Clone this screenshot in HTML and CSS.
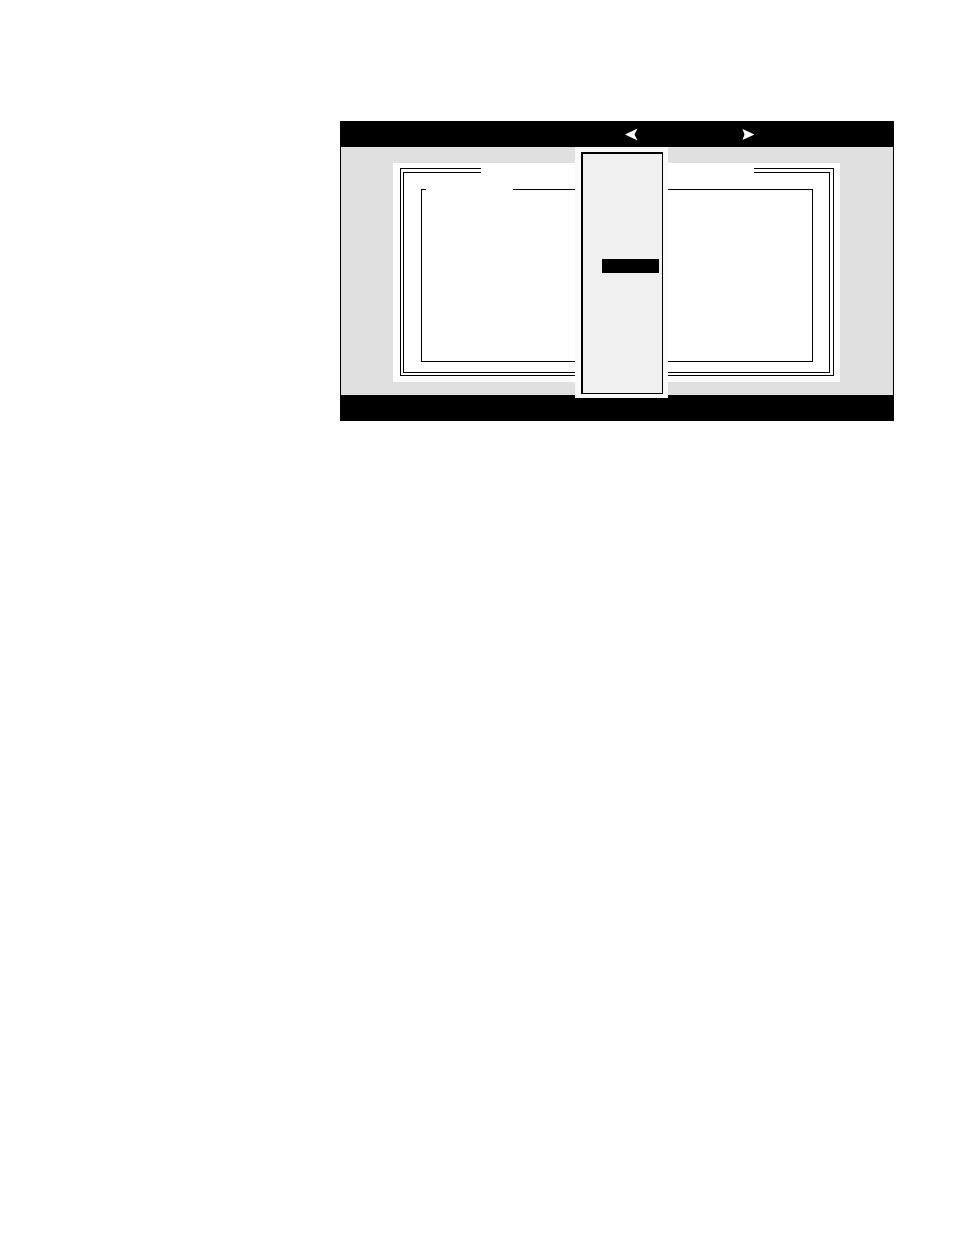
FILE: index.html
```html
<!DOCTYPE html>
<html>
<head>
<meta charset="utf-8">
<link rel="stylesheet" href="styles.css">
</head>
<body>
<div class="page">
  <div class="frame">
    <div class="topbar">
      <svg class="arrow" width="13" height="13" viewBox="0 0 13 13"><path d="M0 6.5 L12.5 0.5 L9.5 6.5 L12.5 12.5 Z" fill="#fff"/></svg>
      <svg class="arrow" width="13" height="11" viewBox="0 0 13 11"><path d="M12.5 5.5 L0.5 0 L2.5 5.5 L0.5 11 Z" fill="#fff"/></svg>
    </div>
    <div class="body">
      <div class="panel">
        <div class="outer">
          <div class="inner">
            <div class="content"></div>
            <span class="content-gap"></span>
          </div>
          <span class="title-gap"></span>
        </div>
      </div>
    </div>
    <div class="bottombar"></div>
    <div class="popup">
      <div class="popup-box">
        <div class="highlight"></div>
      </div>
    </div>
  </div>
</div>
</body>
</html>
```

FILE: styles.css
```css
html, body {
  margin: 0;
  padding: 0;
  background: #fff;
  font-family: "Liberation Sans", Arial, sans-serif;
}
.page {
  padding: 121px 0 0 340px;
}
.frame {
  position: relative;
  width: 552px;
  border: 1px solid #000;
  background: #000;
}
.topbar {
  height: 25px;
  background: #000;
  display: flex;
  align-items: center;
  padding-left: 284px;
  gap: 104px;
  box-sizing: border-box;
}
.arrow {
  display: block;
}
.body {
  background: #e0e0e0;
  height: 248px;
  padding: 16px 0 0 52px;
  box-sizing: border-box;
}
.panel {
  width: 447px;
  height: 219px;
  background: #fff;
  padding: 5px 6px 6px 7px;
  box-sizing: border-box;
}
.outer {
  position: relative;
  height: 100%;
  border: 1px solid #000;
  padding: 3px 3px 2px 2px;
  box-sizing: border-box;
}
.inner {
  position: relative;
  height: 100%;
  border: 1px solid #000;
  padding: 16px 16px 10px 17px;
  box-sizing: border-box;
}
.content {
  height: 100%;
  border: 1px solid #000;
  box-sizing: border-box;
}
.title-gap {
  position: absolute;
  left: 80px;
  top: -2px;
  width: 273px;
  height: 7px;
  background: #fff;
}
.content-gap {
  position: absolute;
  left: 22px;
  top: 14px;
  width: 87px;
  height: 4px;
  background: #fff;
}
.bottombar {
  height: 25px;
  background: #000;
}
.popup {
  position: absolute;
  left: 234px;
  top: 25px;
  width: 93px;
  height: 251px;
  background: #f9f9f9;
  padding: 5px 5px 4px 6px;
  box-sizing: border-box;
}
.popup-box {
  height: 100%;
  border: 2px solid #000;
  border-width: 2px 1px 1px 2px;
  background: #f0f0f0;
  box-sizing: border-box;
  padding: 105px 3px 0 19px;
}
.highlight {
  height: 14px;
  background: #000;
}
```
